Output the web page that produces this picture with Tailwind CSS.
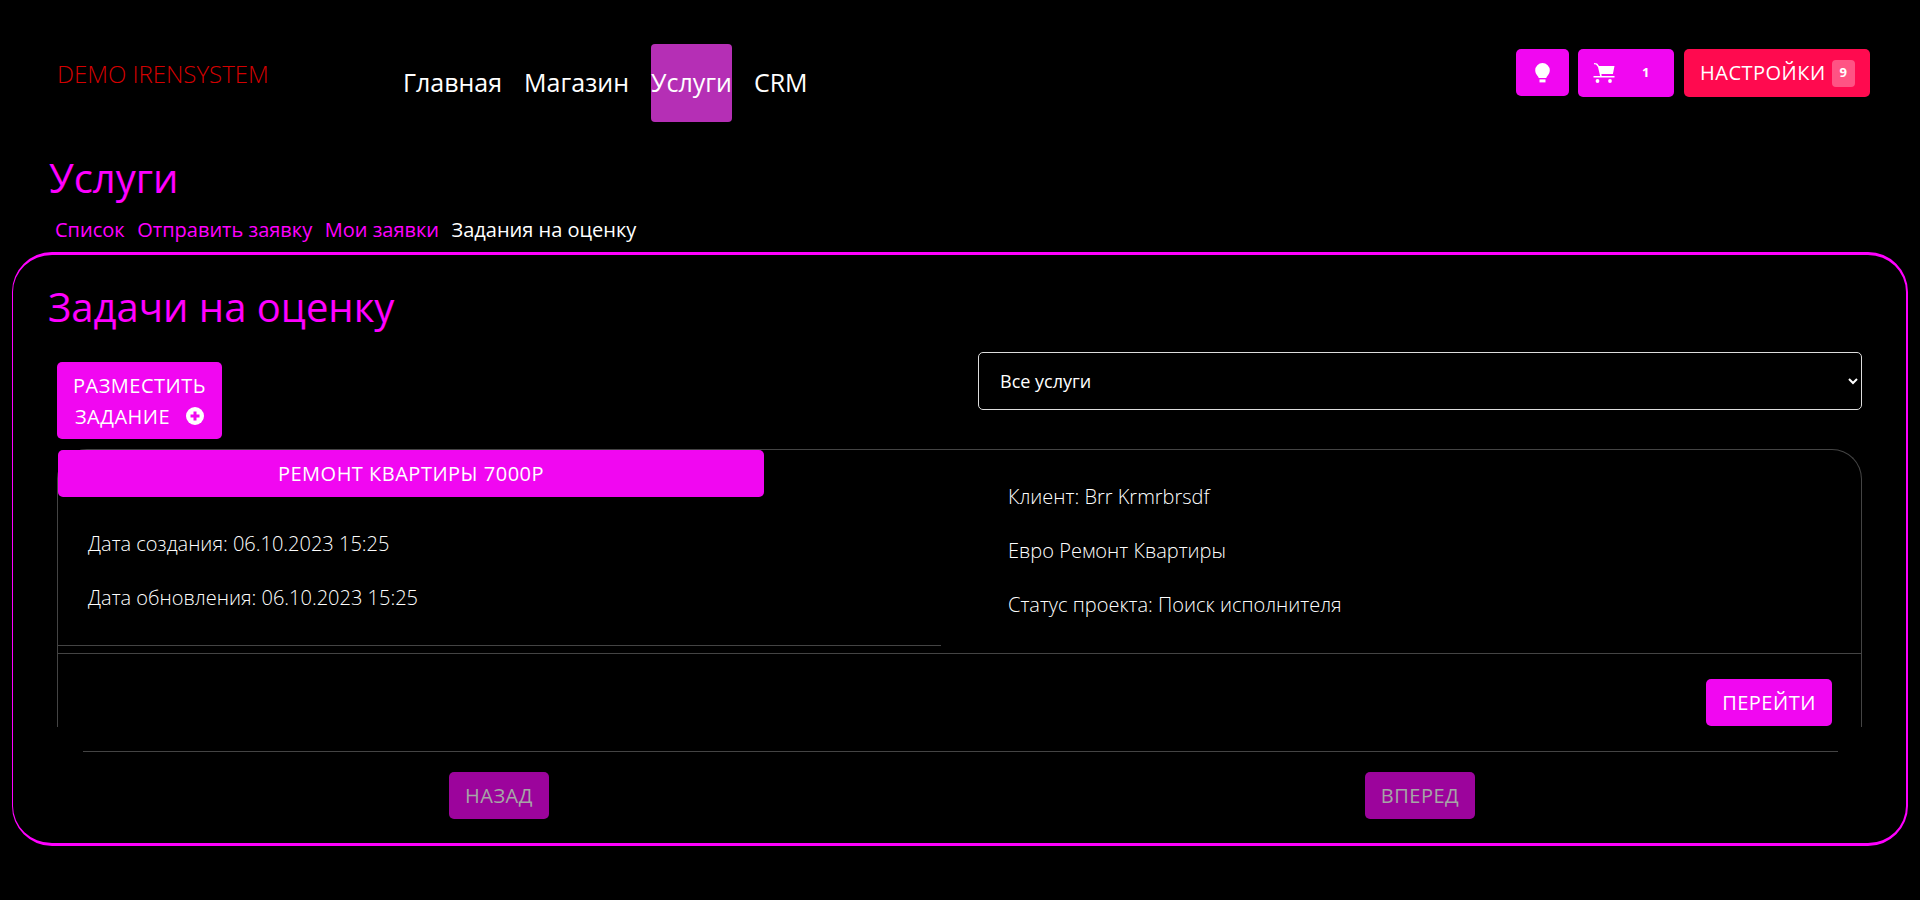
<!DOCTYPE html>
<html lang="ru">
<head>
    <meta charset="UTF-8">
    <meta name="viewport" content="width=device-width, initial-scale=1.0">
    <title>Услуги</title>
    <script src="https://cdn.jsdelivr.net/npm/@tailwindcss/browser@4"></script>
</head>
<body class="bg-black text-white font-['Open_Sans',sans-serif] h-[900px] overflow-hidden">

    <!-- top nav -->
    <header class="flex items-start pt-[44px] h-[122px]">
        <a class="w-[346px] ml-[57px] mt-[14px] text-[24px] leading-[32px] font-light text-[#d40000]">DEMO IRENSYSTEM</a>
        <nav class="flex gap-[22px] text-[25px]">
            <a class="h-[78px] flex items-center">Главная</a>
            <a class="h-[78px] flex items-center">Магазин</a>
            <a class="h-[78px] flex items-center bg-[#b52fb5] rounded-[4px]">Услуги</a>
            <a class="h-[78px] flex items-center">CRM</a>
        </nav>
        <div class="ml-auto mr-[50px] mt-[5px] flex items-start">
            <button class="w-[53px] h-[47px] bg-[#f107f1] rounded-[5px] flex items-center justify-center">
                <svg class="w-[15px] h-[20px]" viewBox="0 0 15 20" fill="#fff"><path d="M7.500 0A7.300 7.300 0 0 0 .2 7.300c0 2.600 1.200 4.200 2.400 5.600.7.800 1 1.400 1.100 2h7.600c.1-.6.400-1.200 1.100-2 1.200-1.400 2.400-3 2.400-5.600A7.300 7.300 0 0 0 7.500 0z"/><rect x="4.500" y="16.400" width="6" height="3"/></svg>
            </button>
            <button class="ml-[9px] w-[96px] h-[48px] bg-[#f107f1] rounded-[5px] flex items-center pl-[15px]">
                <svg class="w-[22px] h-[20px]" viewBox="0 0 22 20" fill="#fff"><path d="M1 0l3.200.6L6 3h15.500l-1.600 8H8.400l.3 2H21.500v1.500H.5V13h6.600L5 4 3 1.600 1 1.200z"/><circle cx="4.500" cy="18" r="1.900"/><circle cx="17" cy="18" r="1.900"/></svg>
                <span class="ml-[27px] text-[13px] font-bold">1</span>
            </button>
            <button class="ml-[10px] w-[186px] h-[48px] bg-[#ff0a4f] rounded-[5px] flex items-center pl-[16px] text-[20px] font-medium tracking-[0.5px]">
                НАСТРОЙКИ
                <span class="ml-[6px] w-[23px] h-[27px] bg-white/30 rounded-[4px] text-[13px] font-bold tracking-normal flex items-center justify-center">9</span>
            </button>
        </div>
    </header>

    <h1 class="ml-[49px] mt-[31px] text-[40px] leading-[50px] text-[#f0f]">Услуги</h1>

    <div class="ml-[55px] mt-[13px] flex gap-[12.500px] text-[20px] leading-[28px] text-[#f0f]">
        <a>Список</a>
        <a>Отправить заявку</a>
        <a>Мои заявки</a>
        <a class="text-white">Задания на оценку</a>
    </div>

    <!-- main card -->
    <main class="mx-[12px] mt-[8px] h-[594px] border-y-[3px] border-l border-r-2 border-[#f0f] rounded-[40px]">
        <h2 class="ml-[35px] mt-[27px] text-[40px] leading-[50px] text-[#f0f]">Задачи на оценку</h2>

        <div class="flex items-start mt-[20px] ml-[44px]">
            <button class="mt-[10px] w-[165px] h-[77px] bg-[#f107f1] rounded-[5px] text-[20px] font-medium tracking-[0.5px] leading-[31px]">
                РАЗМЕСТИТЬ<br>
                <span class="inline-flex items-center">ЗАДАНИЕ
                    <svg class="ml-[16px] w-[18px] h-[18px]" viewBox="0 0 18 18"><circle cx="9" cy="9" r="9" fill="#fff"/><path d="M9 4.500v9M4.500 9h9" stroke="#f107f1" stroke-width="3"/></svg>
                </span>
            </button>
            <select class="ml-[756px] w-[884px] h-[58px] border border-[#ddd] rounded-[5px] bg-black text-white text-[18px] pl-[17px] pr-[2px] [color-scheme:dark]">
                <option>Все услуги</option>
            </select>
        </div>

        <!-- task card -->
        <section class="ml-[44px] mt-[10px] w-[1805px] h-[278px] border border-b-0 border-[#444] rounded-t-[30px]">
            <div class="flex border-b border-[#444] h-[204px]">
                <div class="w-[883px] h-[196px] border-b border-[#444]">
                    <div class="w-[706px] h-[47px] bg-[#f107f1] rounded-[5px] flex items-center justify-center text-[20px] font-medium tracking-[0.5px]">РЕМОНТ КВАРТИРЫ 7000Р</div>
                    <p class="ml-[30px] mt-[33px] text-[20px] leading-[27px] font-light">Дата создания: 06.10.2023 15:25</p>
                    <p class="ml-[30px] mt-[27px] text-[20px] leading-[27px] font-light">Дата обновления: 06.10.2023 15:25</p>
                </div>
                <div class="ml-[37px] flex-1 h-[204px] border-b border-[#444] pl-[30px] pt-[33px] text-[20px] leading-[27px] font-light">
                    <p>Клиент: Brr Krmrbrsdf</p>
                    <p class="mt-[27px]">Евро Ремонт Квартиры</p>
                    <p class="mt-[27px]">Статус проекта: Поиск исполнителя</p>
                </div>
            </div>
            <div class="flex justify-end pt-[25px] pr-[29px]">
                <button class="w-[126px] h-[47px] bg-[#f107f1] rounded-[5px] text-[20px] font-medium tracking-[0.5px]">ПЕРЕЙТИ</button>
            </div>
        </section>

        <hr class="ml-[70px] mt-[24px] w-[1755px] border-[#444]">

        <div class="flex mt-[20px]">
            <button class="ml-[436px] w-[100px] h-[47px] bg-[#9c049c] rounded-[5px] text-[20px] font-medium tracking-[0.5px] text-[#a6a6a6]">НАЗАД</button>
            <button class="ml-[816px] w-[110px] h-[47px] bg-[#9c049c] rounded-[5px] text-[20px] font-medium tracking-[0.5px] text-[#a6a6a6]">ВПЕРЕД</button>
        </div>
    </main>

</body>
</html>
